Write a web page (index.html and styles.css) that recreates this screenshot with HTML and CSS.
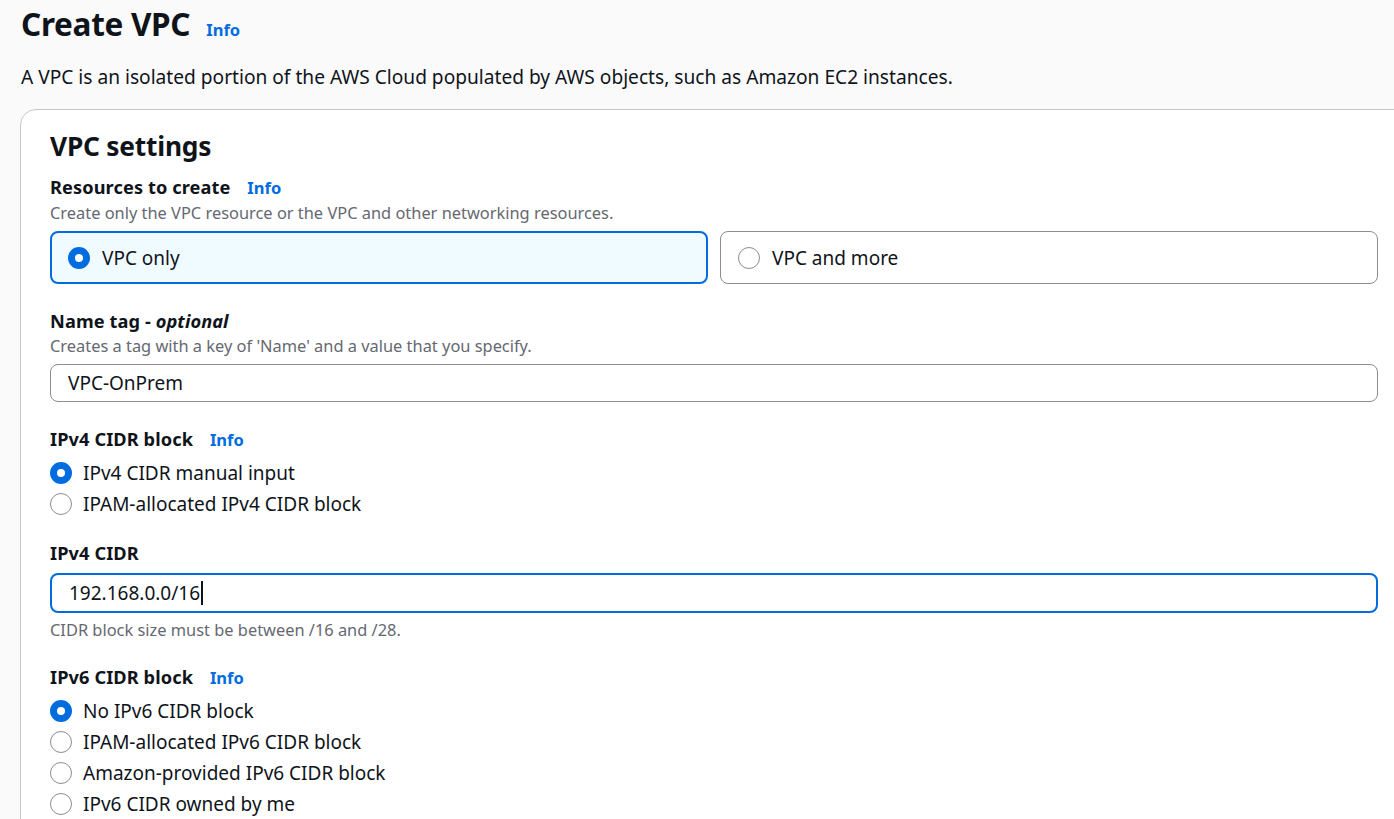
FILE: index.html
```html
<!DOCTYPE html>
<html lang="en">
<head>
  <meta charset="UTF-8" />
  <title>Create VPC</title>
  <link rel="stylesheet" href="styles.css">
</head>
<body>

  <div class="page-head">
    <h1>Create VPC</h1>
    <a class="info" href="#">Info</a>
  </div>
  <p class="page-desc">A VPC is an isolated portion of the AWS Cloud populated by AWS objects, such as Amazon EC2 instances.</p>

  <div class="card">
    <h2>VPC settings</h2>

    <!-- Resources to create -->
    <div class="field">
      <div class="field-label">Resources to create <a class="info" href="#">Info</a></div>
      <div class="field-desc">Create only the VPC resource or the VPC and other networking resources.</div>
      <div class="tiles">
        <div class="tile selected"><span class="radio checked"></span>VPC only</div>
        <div class="tile"><span class="radio"></span>VPC and more</div>
      </div>
    </div>

    <!-- Name tag -->
    <div class="field">
      <div class="field-label">Name tag - <em>optional</em></div>
      <div class="field-desc">Creates a tag with a key of 'Name' and a value that you specify.</div>
      <div class="input">VPC-OnPrem</div>
    </div>

    <!-- IPv4 CIDR block -->
    <div class="field">
      <div class="field-label">IPv4 CIDR block <a class="info" href="#">Info</a></div>
      <div class="radio-group">
        <div class="radio-row"><span class="radio checked"></span>IPv4 CIDR manual input</div>
        <div class="radio-row"><span class="radio"></span>IPAM-allocated IPv4 CIDR block</div>
      </div>
    </div>

    <!-- IPv4 CIDR -->
    <div class="field">
      <div class="field-label">IPv4 CIDR</div>
      <div class="input focused">192.168.0.0/16<span class="caret"></span></div>
      <div class="field-hint">CIDR block size must be between /16 and /28.</div>
    </div>

    <!-- IPv6 CIDR block -->
    <div class="field">
      <div class="field-label">IPv6 CIDR block <a class="info" href="#">Info</a></div>
      <div class="radio-group">
        <div class="radio-row"><span class="radio checked"></span>No IPv6 CIDR block</div>
        <div class="radio-row"><span class="radio"></span>IPAM-allocated IPv6 CIDR block</div>
        <div class="radio-row"><span class="radio"></span>Amazon-provided IPv6 CIDR block</div>
        <div class="radio-row"><span class="radio"></span>IPv6 CIDR owned by me</div>
      </div>
    </div>
  </div>

</body>
</html>
```

FILE: styles.css
```css
*, *::before, *::after { box-sizing: border-box; margin: 0; padding: 0; }

body {
  background: #fafafa;
  color: #0f141a;
  font-family: 'Noto Sans', 'Open Sans', sans-serif;
  padding: 0 0 0 20px;
  overflow: hidden;
  width: 1394px;
  height: 819px;
}

a.info {
  color: #006ce0;
  font-weight: 700;
  text-decoration: none;
  font-size: 16.5px;
}

/* Page header */
.page-head {
  display: flex;
  align-items: baseline;
  gap: 16px;
  padding-top: 2px;
  padding-left: 1px;
}

.page-head h1 {
  font-size: 31.5px;
  font-weight: 700;
  line-height: 44px;
  letter-spacing: -0.3px;
}

.page-desc {
  font-size: 19.15px;
  line-height: 26px;
  margin-top: 18px;
  padding-left: 1px;
}

/* Card container */
.card {
  margin-top: 19px;
  width: 1400px;
  height: 760px;
  background: #fff;
  border: 1px solid #c6c6cd;
  border-radius: 16px;
  padding: 18px 30px 0 29px;
}

.card h2 {
  font-size: 26.3px;
  font-weight: 700;
  line-height: 36px;
  letter-spacing: -0.2px;
  margin-bottom: 10px;
}

/* Form fields */
.field {
  width: 1328px;
  margin-bottom: 24px;
}

.field-label {
  font-size: 18.2px;
  font-weight: 700;
  line-height: 26px;
  letter-spacing: 0.1px;
}

.field-label .info { margin-left: 12px; letter-spacing: 0; }

.field-label em { font-style: italic; }

.field-desc, .field-hint {
  font-size: 16.4px;
  line-height: 24px;
  color: #656871;
}

.field-desc { margin-bottom: 6px; }
.field-hint { margin-top: 5px; margin-bottom: -2px; }

/* Tiles */
.tiles {
  display: grid;
  grid-template-columns: 1fr 1fr;
  gap: 12px;
}

.tile {
  height: 53px;
  display: flex;
  align-items: center;
  gap: 12px;
  padding: 0 17px;
  font-size: 19px;
  border: 1px solid #8c8c94;
  border-radius: 8px;
  background: #fff;
}

.tile.selected {
  border: 2px solid #006ce0;
  background: #f0fbff;
  padding-left: 16px;
}

/* Radios */
.radio {
  width: 22px;
  height: 22px;
  flex: none;
  border-radius: 50%;
  border: 1.5px solid #8c8c94;
  background: #fff;
}

.radio.checked {
  border: 7px solid #006ce0;
}

.radio-group {
  display: flex;
  flex-direction: column;
  padding-top: 4.5px;
  margin-bottom: -4px;
}

.radio-row {
  display: flex;
  align-items: center;
  gap: 11px;
  font-size: 19px;
  height: 31px;
}

/* Inputs */
.input {
  height: 38px;
  display: flex;
  align-items: center;
  padding: 0 17px;
  font-size: 19px;
  border: 1px solid #8c8c94;
  border-radius: 8px;
  background: #fff;
}

.input.focused {
  border: 2px solid #006ce0;
  height: 40px;
  margin-top: 7px;
  padding-left: 17px;
}

.caret {
  display: inline-block;
  width: 2px;
  height: 24px;
  background: #0f141a;
  margin-left: 1px;
}
```
